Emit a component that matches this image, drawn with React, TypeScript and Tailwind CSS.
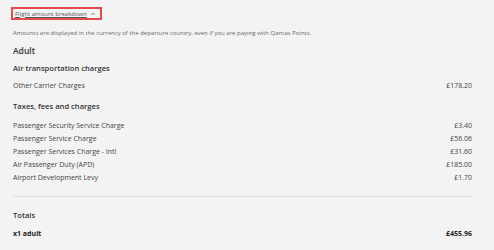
import React from 'react';

const AIR = [{ label: 'Other Carrier Charges', price: '£178.20' }];

const TAXES = [
  { label: 'Passenger Security Service Charge', price: '£3.40' },
  { label: 'Passenger Service Charge', price: '£56.06' },
  { label: 'Passenger Services Charge - Intl', price: '£31.60' },
  { label: 'Air Passenger Duty (APD)', price: '£185.00' },
  { label: 'Airport Development Levy', price: '£1.70' },
];

const Row: React.FC<{ label: string; price: string }> = ({ label, price }) => (
  <div className="flex justify-between items-center h-[13px] text-[7px] text-[#444]">
    <span>{label}</span>
    <span>{price}</span>
  </div>
);

export default function App() {
  return (
    <div className="w-[494px] h-[250px] bg-[#f3f3f3] font-['Open_Sans',sans-serif] px-[11px] pt-[7px] overflow-hidden leading-none">
      <div className="pr-[11px]">
        {/* Toggle */}
        <div className="flex">
          <button className="flex items-center gap-[3px] border-2 border-[#e5484d] pl-[2px] pr-[4px] h-[13px] text-[6px] text-[#555]">
            <span className="underline">Flight amount breakdown</span>
            <svg width="6" height="4" viewBox="0 0 6 4" fill="none">
              <path d="M1 3 L3 1 L5 3" stroke="#777" strokeWidth="0.8" />
            </svg>
          </button>
        </div>

        <div className="pl-[2px]">
          <p className="mt-[8px] text-[6px] text-[#6b6b6b] leading-[10px]">
            Amounts are displayed in the currency of the departure country, even if you are paying with Qantas Points.
          </p>

          <h2 className="mt-[7px] text-[8.5px] font-semibold text-[#333] leading-[12px]">Adult</h2>

          <h3 className="mt-[5px] text-[7.6px] font-semibold text-[#333] leading-[12px]">Air transportation charges</h3>
          <div className="mt-[5px]">
            {AIR.map((r) => (
              <Row key={r.label} {...r} />
            ))}
          </div>

          <h3 className="mt-[8px] text-[7.6px] font-semibold text-[#333] leading-[12px]">Taxes, fees and charges</h3>
          <div className="mt-[7px]">
            {TAXES.map((r) => (
              <Row key={r.label} {...r} />
            ))}
          </div>

          <div className="mt-[12px] border-t border-[#dcdcdc]" />

          <h3 className="mt-[12px] text-[7.6px] font-semibold text-[#333] leading-[12px]">Totals</h3>
          <div className="mt-[6px] flex justify-between items-center h-[12px] text-[7px] font-bold text-[#222]">
            <span>x1 adult</span>
            <span>£455.96</span>
          </div>
        </div>
      </div>
    </div>
  );
}
